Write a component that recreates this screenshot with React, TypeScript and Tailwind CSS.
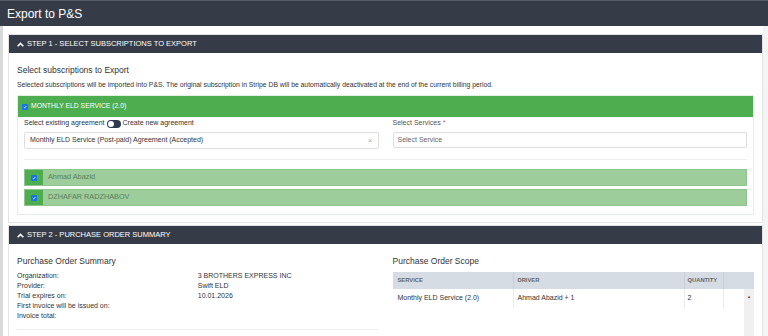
import React from 'react'

const Chevron = () => (
  <svg width="7" height="5" viewBox="0 0 10 7" className="mr-[3px]">
    <path d="M1 6 L5 2 L9 6" stroke="white" strokeWidth="2.4" fill="none" />
  </svg>
)

const Check = ({ size = 7 }: { size?: number }) => (
  <span
    className="inline-flex items-center justify-center rounded-[1px] bg-[#1a73e8]"
    style={{ width: size, height: size }}
  >
    <svg width={size - 2} height={size - 2} viewBox="0 0 10 10">
      <path d="M2 5.5 L4.2 7.6 L8.2 2.6" stroke="white" strokeWidth="1.8" fill="none" />
    </svg>
  </span>
)

const StepHeader = ({ title }: { title: string }) => (
  <div className="flex h-[18px] items-center bg-[#353c48] px-2 text-[7.5px] uppercase text-white">
    <Chevron />
    {title}
  </div>
)

const drivers = ['Ahmad Abazid', 'DZHAFAR RADZHABOV']

const summary = [
  ['Organization:', '3 BROTHERS EXPRESS INC'],
  ['Provider:', 'Swift ELD'],
  ['Trial expires on:', '10.01.2026'],
  ['First invoice will be issued on:', ''],
  ['Invoice total:', ''],
]

export default function App() {
  return (
    <div className="h-[336px] w-[768px] overflow-hidden bg-white font-['Liberation_Sans',Arial,sans-serif] text-[#333]">
      <div className="flex h-[26px] items-center border-t border-[#555c66] bg-[#353c48] pl-[7px] text-[12px] text-white">
        Export to P&amp;S
      </div>

      <div className="flex h-full border-l-[3px] border-[#d9d9d9]">
        <div className="flex flex-1 flex-col pl-[5px] pt-2">
          {/* step 1 */}
          <div className="border border-[#e3e3e3]">
            <StepHeader title="Step 1 - Select subscriptions to export" />
            <div className="px-2 pt-[11px] pb-[7px]">
              <div className="text-[8.5px] leading-[12px]">Select subscriptions to Export</div>
              <div className="mt-[4px] text-[6.8px] leading-[9px]">
                Selected subscriptions will be imported into P&amp;S. The original subscription in Stripe DB will be
                automatically deactivated at the end of the current billing period.
              </div>

              <div className="mt-[6px] border border-[#e2f0e2]">
                <div className="flex h-[21px] items-center gap-[3px] bg-[#4cae4f] px-1 text-[6.8px] text-white">
                  <Check size={6} />
                  MONTHLY ELD SERVICE (2.0)
                </div>
                <div className="px-[6px] pb-[8px]">
                  <div className="grid grid-cols-2 gap-[14px] pt-[1px]">
                    <div>
                      <div className="flex h-[11px] items-center gap-[2px] text-[7px]">
                        Select existing agreement
                        <span className="flex h-[8px] w-[14px] items-center rounded-full bg-[#2c3a4f] pl-[1px]">
                          <span className="h-[6px] w-[6px] rounded-full bg-white" />
                        </span>
                        Create new agreement
                      </div>
                      <div className="mt-[3px] flex h-[17px] items-center justify-between rounded-[2px] border border-[#dedede] px-[5px] text-[7px]">
                        <span>Monthly ELD Service (Post-paid) Agreement (Accepted)</span>
                        <span className="text-[8px] text-[#aaa]">×</span>
                      </div>
                    </div>
                    <div>
                      <div className="flex h-[11px] items-center text-[7px] text-[#555]">
                        Select Services<span className="ml-[2px] text-[#d9534f]">*</span>
                      </div>
                      <div className="mt-[3px] flex h-[16px] items-center rounded-[2px] border border-[#dedede] px-[4px] text-[7px] text-[#666]">
                        Select Service
                      </div>
                    </div>
                  </div>

                  <div className="mt-[10px] border-t border-[#eeeeee]" />

                  <div className="mt-[9px] flex flex-col gap-[3px]">
                    {drivers.map((d) => (
                      <div key={d} className="flex h-[17px] items-stretch border border-[#8fc48f] bg-[#9ccd9a]">
                        <div className="flex w-[18px] items-center justify-center bg-[#4cae4f]">
                          <Check size={6} />
                        </div>
                        <div className="flex items-center pl-[5px] text-[7.3px] text-[#5d7d5d]">{d}</div>
                      </div>
                    ))}
                  </div>
                </div>
              </div>
            </div>
          </div>

          {/* step 2 */}
          <div className="mt-[2px] flex-1 border border-[#e3e3e3]">
            <StepHeader title="Step 2 - Purchase order summary" />
            <div className="grid grid-cols-2 gap-[14px] px-2 pt-[11px]">
              <div>
                <div className="text-[8.5px] leading-[12px]">Purchase Order Summary</div>
                <div className="mt-[4px]">
                  {summary.map(([k, v]) => (
                    <div key={k} className="grid grid-cols-2 text-[7px] leading-[10px]">
                      <span>{k}</span>
                      <span>{v}</span>
                    </div>
                  ))}
                </div>
                <div className="mt-[8px] border-t border-[#eeeeee]" />
              </div>
              <div>
                <div className="text-[8.5px] leading-[12px]">Purchase Order Scope</div>
                <div className="mt-[5px]">
                  <div className="flex h-[17px] bg-[#d6dce4] text-[5.8px] font-bold uppercase text-[#666]">
                    <div className="flex w-[121px] items-center border-r border-[#c8ced6] pl-[5px]">Service</div>
                    <div className="flex w-[171px] items-center border-r border-[#c8ced6] pl-[4px]">Driver</div>
                    <div className="flex w-[39px] items-center border-r border-[#c8ced6] pl-[3px]">Quantity</div>
                    <div className="flex-1" />
                  </div>
                  <div className="flex h-[60px]">
                    <div className="flex h-[19px] w-[121px] items-center border-r border-[#ececec] pl-[5px] text-[7px]">
                      Monthly ELD Service (2.0)
                    </div>
                    <div className="flex h-[19px] w-[171px] items-center border-r border-[#ececec] pl-[4px] text-[7px]">
                      Ahmad Abazid + 1
                    </div>
                    <div className="flex h-[19px] w-[39px] items-center border-r border-[#ececec] pl-[3px] text-[7px]">
                      2
                    </div>
                    <div className="flex flex-1 justify-end">
                      <div className="flex w-[10px] justify-center bg-[#f0f0f0] pt-[5px] text-[4px] text-[#444]">▲</div>
                    </div>
                  </div>
                </div>
              </div>
            </div>
          </div>
        </div>
        <div className="w-[5px] bg-[#f4f4f4]" />
      </div>
    </div>
  )
}
